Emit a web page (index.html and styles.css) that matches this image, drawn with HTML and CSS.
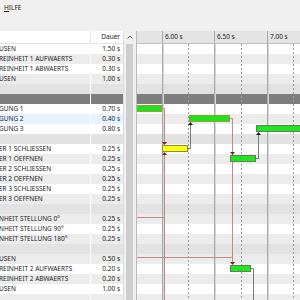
FILE: index.html
```html
<!DOCTYPE html>
<html lang="de">
<head>
    <meta charset="UTF-8">
    <title>Ablaufplan</title>
    <link rel="stylesheet" href="styles.css">
</head>
<body>
    <div class="menubar"><span class="menu"><u>H</u>ILFE</span></div>
    <div class="toolbar"></div>

    <div class="main">
        <div class="steps">
            <div class="steps-head">
                <div class="col-name"></div>
                <div class="col-dur">Dauer</div>
            </div>
            <div class="row"><div class="col-name"><span class="name">USEN</span></div><div class="col-dur">1.50 s</div></div>
            <div class="row alt"><div class="col-name"><span class="name">REINHEIT 1 AUFWAERTS</span></div><div class="col-dur">0.30 s</div></div>
            <div class="row"><div class="col-name"><span class="name">REINHEIT 1 ABWAERTS</span></div><div class="col-dur">0.30 s</div></div>
            <div class="row alt"><div class="col-name"><span class="name">USEN</span></div><div class="col-dur">1.00 s</div></div>
            <div class="row empty"><div class="col-name"></div><div class="col-dur"></div></div>
            <div class="row group"><div class="col-name"></div><div class="col-dur"></div></div>
            <div class="row"><div class="col-name"><span class="name">GUNG 1</span></div><div class="col-dur">0.70 s</div></div>
            <div class="row sel"><div class="col-name"><span class="name">GUNG 2</span></div><div class="col-dur">0.40 s</div></div>
            <div class="row"><div class="col-name"><span class="name">GUNG 3</span></div><div class="col-dur">0.80 s</div></div>
            <div class="row empty"><div class="col-name"></div><div class="col-dur"></div></div>
            <div class="row"><div class="col-name"><span class="name">ER 1 SCHLIESSEN</span></div><div class="col-dur">0.25 s</div></div>
            <div class="row alt"><div class="col-name"><span class="name">ER 1 OEFFNEN</span></div><div class="col-dur">0.25 s</div></div>
            <div class="row"><div class="col-name"><span class="name">ER 2 SCHLIESSEN</span></div><div class="col-dur">0.25 s</div></div>
            <div class="row alt"><div class="col-name"><span class="name">ER 2 OEFFNEN</span></div><div class="col-dur">0.25 s</div></div>
            <div class="row"><div class="col-name"><span class="name">ER 3 SCHLIESSEN</span></div><div class="col-dur">0.25 s</div></div>
            <div class="row alt"><div class="col-name"><span class="name">ER 3 OEFFNEN</span></div><div class="col-dur">0.25 s</div></div>
            <div class="row empty"><div class="col-name"></div><div class="col-dur"></div></div>
            <div class="row alt"><div class="col-name"><span class="name">NHEIT STELLUNG 0°</span></div><div class="col-dur">0.25 s</div></div>
            <div class="row"><div class="col-name"><span class="name">NHEIT STELLUNG 90°</span></div><div class="col-dur">0.25 s</div></div>
            <div class="row alt"><div class="col-name"><span class="name">NHEIT STELLUNG 180°</span></div><div class="col-dur">0.25 s</div></div>
            <div class="row empty"><div class="col-name"></div><div class="col-dur"></div></div>
            <div class="row alt"><div class="col-name"><span class="name">USEN</span></div><div class="col-dur">0.50 s</div></div>
            <div class="row"><div class="col-name"><span class="name">REINHEIT 2 AUFWAERTS</span></div><div class="col-dur">0.20 s</div></div>
            <div class="row alt"><div class="col-name"><span class="name">REINHEIT 2 ABWAERTS</span></div><div class="col-dur">0.20 s</div></div>
            <div class="row"><div class="col-name"><span class="name">USEN</span></div><div class="col-dur">1.00 s</div></div>
            <div class="row alt"><div class="col-name"></div><div class="col-dur"></div></div>
        </div>

        <div class="vscroll">
            <div class="scroll-btn">
                <svg width="12" height="13" viewBox="0 0 12 13"><polyline points="3.5,7.5 6,5 8.5,7.5" fill="none" stroke="#606060" stroke-width="1"/></svg>
            </div>
            <div class="thumb"></div>
        </div>
        <div class="splitter"></div>

        <div class="gantt">
            <div class="gantt-head">
                <div class="tick-lead"></div>
                <div class="tick t1">6.00 s</div>
                <div class="tick t2">6.50 s</div>
                <div class="tick t3">7.00 s</div>
            </div>
            <div class="gantt-body">
                <div class="row"></div>
                <div class="row alt"></div>
                <div class="row"></div>
                <div class="row alt"></div>
                <div class="row empty"></div>
                <div class="row group"></div>
                <div class="row"></div>
                <div class="row alt"></div>
                <div class="row"></div>
                <div class="row empty"></div>
                <div class="row"></div>
                <div class="row alt"></div>
                <div class="row"></div>
                <div class="row alt"></div>
                <div class="row"></div>
                <div class="row alt"></div>
                <div class="row empty"></div>
                <div class="row alt"></div>
                <div class="row"></div>
                <div class="row alt"></div>
                <div class="row empty"></div>
                <div class="row alt"></div>
                <div class="row"></div>
                <div class="row alt"></div>
                <div class="row"></div>
                <div class="row alt"></div>

                <svg class="overlay" width="163" height="256" viewBox="0 0 163 256">
                    <!-- grid -->
                    <rect class="major" x="25" y="0" width="1" height="256"/>
                    <rect class="major-lt" x="26" y="0" width="1" height="256"/>
                    <rect class="major" x="77" y="0" width="1" height="256"/>
                    <rect class="major-lt" x="78" y="0" width="1" height="256"/>
                    <rect class="major" x="130" y="0" width="1" height="256"/>
                    <rect class="major-lt" x="131" y="0" width="1" height="256"/>
                    <line class="minor" x1="51.5" y1="0" x2="51.5" y2="256"/>
                    <line class="minor" x1="104.5" y1="0" x2="104.5" y2="256"/>
                    <line class="minor" x1="156.5" y1="0" x2="156.5" y2="256"/>

                    <!-- links -->
                    <path class="link-red" d="M25 64.5 H27.5 V98"/>
                    <path class="link-red" d="M27.5 111 V256"/>
                    <path class="link-red" d="M0 173.5 H27.5"/>
                    <path class="link-red" d="M93 74.5 H95.5 V218"/>
                    <path class="link-red" d="M0 213.5 H95.5"/>
                    <path class="link-grey" d="M51 104.5 H53.5 V81"/>
                    <path class="link-grey" d="M119 114.5 H121.5 V91"/>
                    <path class="link-grey" d="M114 224.5 H116.5 V256"/>

                    <!-- bars -->
                    <rect class="bar bar-sel" x="-2.5" y="61.5" width="27" height="6"/>
                    <rect class="bar bar-sel" x="52.5" y="71.5" width="40" height="6"/>
                    <rect class="bar bar-green" x="119.5" y="81.5" width="50" height="6"/>
                    <rect class="bar bar-yellow" x="25.5" y="101.5" width="25" height="6"/>
                    <rect class="bar bar-green" x="93.5" y="111.5" width="25" height="6"/>
                    <rect class="bar bar-green" x="93.5" y="221.5" width="20" height="6"/>

                    <!-- arrow heads -->
                    <polygon class="head-red" points="25,98 30,98 27.5,101"/>
                    <polygon class="head-red" points="25,111 30,111 27.5,108"/>
                    <polygon class="head-red" points="93,108 98,108 95.5,111"/>
                    <polygon class="head-red" points="93,218 98,218 95.5,221"/>
                    <polygon class="head-grey" points="51,81 56,81 53.5,78"/>
                    <polygon class="head-grey" points="119,91 124,91 121.5,88"/>
                </svg>
            </div>
        </div>
    </div>
</body>
</html>
```

FILE: styles.css
```css
body {
    margin: 0;
    height: 300px;
    background: #f0f0f0;
    font-family: "Noto Sans", "Open Sans", sans-serif;
    font-size: 6.5px;
    color: #1b1b1b;
    overflow: hidden;
}
.menubar {
    height: 15px;
    line-height: 15px;
    padding-left: 4px;
}
.toolbar {
    height: 16px;
}
.main {
    display: flex;
    height: 269px;
    overflow: hidden;
}

/* step list */
.steps {
    width: 123px;
    flex: none;
    background: #fff;
    overflow: hidden;
}
.steps-head {
    display: flex;
    height: 12px;
    line-height: 12px;
    border-bottom: 1px solid #e5e5e5;
}
.row {
    display: flex;
    height: 10px;
    line-height: 10px;
    white-space: nowrap;
}
.col-name {
    width: 90px;
    border-right: 1px solid #fff;
    overflow: hidden;
}
.steps-head .col-name {
    border-right-color: #e5e5e5;
}
.col-dur {
    width: 29px;
    padding-right: 3px;
    text-align: right;
}
.name {
    margin-left: -1px;
}
.row.alt {
    background: #ececec;
}
.row.empty {
    background: #e2e2e2;
}
.row.group {
    background: #7d7d7d;
}
.row.sel {
    background: #e5f3ff;
}

/* scrollbar */
.vscroll {
    width: 12px;
    flex: none;
    border-left: 1px solid #dcdcdc;
    background: #f0f0f0;
    overflow: hidden;
}
.scroll-btn {
    height: 13px;
}
.scroll-btn svg {
    display: block;
}
.thumb {
    margin-left: 2px;
    width: 7px;
    height: 256px;
    background: #cdcdcd;
}
.splitter {
    width: 1px;
    flex: none;
    background: #b9b9b9;
}

/* gantt */
.gantt {
    flex: 1;
    background: #fff;
    overflow: hidden;
}
.gantt-head {
    display: flex;
    height: 12px;
    line-height: 12px;
    background: #e4e4e4;
    border-bottom: 1px solid #bdbdbd;
}
.tick-lead {
    width: 25px;
    flex: none;
}
.tick {
    flex: none;
    box-sizing: border-box;
    border-left: 1px solid #a8a8a8;
    padding-left: 2px;
}
.t1 { width: 52px; }
.t2 { width: 53px; }
.t3 { width: 33px; }
.gantt-body {
    position: relative;
}
.overlay {
    position: absolute;
    top: 0;
    left: 0;
    overflow: hidden;
}
.major { fill: #a9a9a9; }
.major-lt { fill: #d6d6d6; }
.minor {
    stroke: #9c9c9c;
    stroke-width: 1;
    stroke-dasharray: 2 2;
}
.link-red {
    fill: none;
    stroke: #c08a8a;
    stroke-width: 1;
}
.link-grey {
    fill: none;
    stroke: #7a7a7a;
    stroke-width: 1;
}
.bar { stroke-width: 1; }
.bar-sel {
    fill: #1fe21f;
    stroke: #9c9c36;
}
.bar-green {
    fill: #1fe61f;
    stroke: #5e7e5e;
}
.bar-yellow {
    fill: #ffff10;
    stroke: #8c8c3c;
}
.head-red { fill: #8e1c1c; }
.head-grey { fill: #1e1e1e; }
```
